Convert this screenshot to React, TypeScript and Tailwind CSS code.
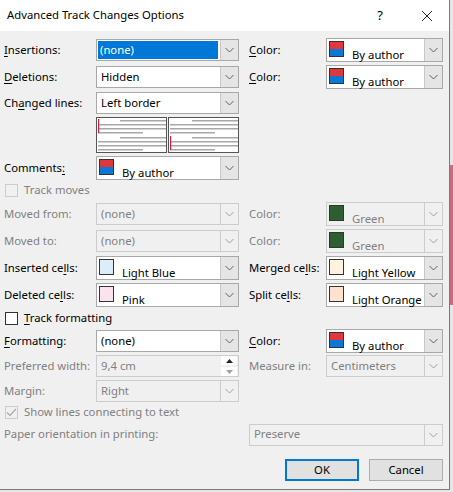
import React from "react";

const FONT = { fontFamily: '"Noto Sans", "Segoe UI", sans-serif' };

function Chevron({ disabled }: { disabled?: boolean }) {
  return (
    <svg width="9" height="6" viewBox="0 0 9 6">
      <path d="M0.5 1 L4.5 5 L8.5 1" fill="none" stroke={disabled ? "#a0a0a0" : "#606060"} strokeWidth="1" />
    </svg>
  );
}

function Swatch({ kind, color }: { kind: "author" | "solid"; color?: string }) {
  if (kind === "author") {
    return (
      <div className="w-[15px] h-[16px] border border-[#333] flex flex-col shrink-0">
        <div className="flex-1 bg-[#e0363d]" />
        <div className="flex-1 bg-[#0a78d4]" />
      </div>
    );
  }
  return <div className="w-[15px] h-[16px] border border-[#333] shrink-0" style={{ background: color }} />;
}

function Dropdown({
  w,
  h = 22,
  text,
  disabled,
  selected,
  swatch,
}: {
  w: number;
  h?: number;
  text: string;
  disabled?: boolean;
  selected?: boolean;
  swatch?: React.ReactNode;
}) {
  return (
    <div
      className={`flex border ${disabled ? "border-[#cccccc] bg-[#f0f0f0]" : "border-[#a8a8a8] bg-white"}`}
      style={{ width: w, height: h }}
    >
      <div className="flex-1 flex items-center min-w-0 px-[1px]">
        {swatch ? (
          <div className="flex items-start h-full pt-[2px] pl-[1px] gap-[8px]">
            {swatch}
            <span className={`text-[11.3px] leading-none whitespace-nowrap mt-[8px] ${disabled ? "text-[#808080]" : "text-black"}`}>{text}</span>
          </div>
        ) : selected ? (
          <div className="h-[18px] flex-1 bg-[#0078d7] text-white text-[11.3px] flex items-center pl-[2px] mr-[1px]">{text}</div>
        ) : (
          <span className={`text-[11.3px] whitespace-nowrap pl-[3px] ${disabled ? "text-[#808080]" : "text-black"}`}>{text}</span>
        )}
      </div>
      <div
        className={`w-[18px] flex items-center justify-center border-l ${
          disabled ? "border-[#cccccc] bg-[#f0f0f0]" : "border-[#c8c8c8] bg-[#e5e5e5]"
        }`}
      >
        <Chevron disabled={disabled} />
      </div>
    </div>
  );
}

function Label({ children, w, disabled }: { children: React.ReactNode; w: number; disabled?: boolean }) {
  return (
    <div className={`text-[11.3px] whitespace-nowrap shrink-0 ${disabled ? "text-[#808080]" : "text-black"}`} style={{ width: w }}>
      {children}
    </div>
  );
}

const U = ({ children }: { children: React.ReactNode }) => <span className="underline underline-offset-2">{children}</span>;

function Preview({ bar }: { bar: "top" | "bottom" }) {
  const lines = [
    [22, 68, 2],
    [0, 68, 6],
    [0, 68, 10],
    [0, 45, 14],
    [22, 68, 19],
    [0, 68, 23],
    [0, 68, 27],
    [0, 45, 31],
  ];
  return (
    <div className="w-[71px] h-[36px] border border-[#555] bg-white">
      <svg width="69" height="34" viewBox="0 0 69 34">
        {lines.map(([x1, x2, y], i) => (
          <rect key={i} x={x1 + 1} y={y} width={x2 - x1} height={1.5} fill="#a8a8a8" />
        ))}
        {bar === "top" ? (
          <rect x="1" y="1" width="1.2" height="14" fill="#c8203c" />
        ) : (
          <rect x="1" y="18" width="1.2" height="14" fill="#c8203c" />
        )}
      </svg>
    </div>
  );
}

function Checkbox({ checked, disabled }: { checked?: boolean; disabled?: boolean }) {
  return (
    <div
      className={`w-[13px] h-[13px] border flex items-center justify-center ${
        disabled ? "border-[#cccccc] bg-[#f0f0f0]" : "border-[#333] bg-white"
      }`}
    >
      {checked && (
        <svg width="11" height="9" viewBox="0 0 11 9">
          <path d="M1 4.5 L4 7.5 L10 1" fill="none" stroke="#a8a8a8" strokeWidth="1.2" />
        </svg>
      )}
    </div>
  );
}

function Row({ mt, h = 24, children }: { mt: number; h?: number; children: React.ReactNode }) {
  return (
    <div className="flex items-center" style={{ marginTop: mt, height: h }}>
      {children}
    </div>
  );
}

export default function App() {
  const LW = 92;
  const RW = 77;
  const DW = 143;
  const CW = 117;
  return (
    <div className="w-[453px] h-[492px] bg-[#e6e6e6] relative overflow-hidden" style={FONT}>
      <div className="absolute right-0 top-[165px] w-[3px] h-[140px] bg-[#c86b82]" />
      <div className="w-[450px] h-[490px] bg-[#f0f0f0] border-r border-b border-[#7a7a7a] flex flex-col">
        <div className="h-[31px] bg-white flex items-center shrink-0">
          <div className="pl-[7px] text-[11.3px] text-black flex-1">Advanced Track Changes Options</div>
          <div className="w-[20px] text-[13px] text-black text-center mr-[27px]">?</div>
          <div className="w-[20px] mr-[12px] flex items-center justify-center">
            <svg width="12" height="12" viewBox="0 0 12 12">
              <path d="M1 1 L11 11 M11 1 L1 11" stroke="#222" strokeWidth="1" />
            </svg>
          </div>
        </div>
        <div className="pl-[4px] flex flex-col">
          <Row mt={7}>
            <Label w={LW}>
              <U>I</U>nsertions:
            </Label>
            <Dropdown w={DW} text="(none)" selected />
            <div className="w-[10px]" />
            <Label w={RW}>
              <U>C</U>olor:
            </Label>
            <Dropdown w={CW} h={24} text="By author" swatch={<Swatch kind="author" />} />
          </Row>
          <Row mt={3}>
            <Label w={LW}>
              <U>D</U>eletions:
            </Label>
            <Dropdown w={DW} text="Hidden" />
            <div className="w-[10px]" />
            <Label w={RW}>
              <U>C</U>olor:
            </Label>
            <Dropdown w={CW} h={24} text="By author" swatch={<Swatch kind="author" />} />
          </Row>
          <Row mt={2}>
            <Label w={LW}>
              Ch<U>a</U>nged lines:
            </Label>
            <Dropdown w={DW} text="Left border" />
          </Row>
          <div className="flex mt-[2px]" style={{ marginLeft: LW }}>
            <Preview bar="top" />
            <div className="w-[1px]" />
            <Preview bar="bottom" />
          </div>
          <Row mt={3}>
            <Label w={LW}>
              Comments<U>:</U>
            </Label>
            <Dropdown w={DW} h={24} text="By author" swatch={<Swatch kind="author" />} />
          </Row>
          <Row mt={2} h={16}>
            <div className="ml-[1px] mr-[6px]">
              <Checkbox disabled />
            </div>
            <span className="text-[11.3px] text-[#808080]">Track moves</span>
          </Row>
          <Row mt={4}>
            <Label w={LW} disabled>
              Moved from:
            </Label>
            <Dropdown w={DW} text="(none)" disabled />
            <div className="w-[10px]" />
            <Label w={RW} disabled>
              Color:
            </Label>
            <Dropdown w={CW} h={24} text="Green" disabled swatch={<Swatch kind="solid" color="#2c5e31" />} />
          </Row>
          <Row mt={3}>
            <Label w={LW} disabled>
              Moved to:
            </Label>
            <Dropdown w={DW} text="(none)" disabled />
            <div className="w-[10px]" />
            <Label w={RW} disabled>
              Color:
            </Label>
            <Dropdown w={CW} h={24} text="Green" disabled swatch={<Swatch kind="solid" color="#2c5e31" />} />
          </Row>
          <Row mt={3}>
            <Label w={LW}>
              Inserted ce<U>l</U>ls:
            </Label>
            <Dropdown w={DW} h={24} text="Light Blue" swatch={<Swatch kind="solid" color="#ddedf8" />} />
            <div className="w-[10px]" />
            <Label w={RW}>
              Merged ce<U>l</U>ls:
            </Label>
            <Dropdown w={CW} h={24} text="Light Yellow" swatch={<Swatch kind="solid" color="#fff3e0" />} />
          </Row>
          <Row mt={3}>
            <Label w={LW}>
              Deleted ce<U>l</U>ls:
            </Label>
            <Dropdown w={DW} h={24} text="Pink" swatch={<Swatch kind="solid" color="#fbe3ee" />} />
            <div className="w-[10px]" />
            <Label w={RW}>
              Split ce<U>l</U>ls:
            </Label>
            <Dropdown w={CW} h={24} text="Light Orange" swatch={<Swatch kind="solid" color="#fde3cd" />} />
          </Row>
          <Row mt={3} h={16}>
            <div className="ml-[1px] mr-[6px]">
              <Checkbox />
            </div>
            <span className="text-[11.3px] text-black">
              <U>T</U>rack formatting
            </span>
          </Row>
          <Row mt={3}>
            <Label w={LW}>
              <U>F</U>ormatting:
            </Label>
            <Dropdown w={DW} text="(none)" />
            <div className="w-[10px]" />
            <Label w={RW}>
              <U>C</U>olor:
            </Label>
            <Dropdown w={CW} h={24} text="By author" swatch={<Swatch kind="author" />} />
          </Row>
          <Row mt={1}>
            <Label w={LW} disabled>
              Preferred width:
            </Label>
            <div className="flex border border-[#cccccc] bg-[#f0f0f0] h-[22px]" style={{ width: DW }}>
              <div className="flex-1 flex items-center pl-[4px] text-[11.3px] text-[#808080]">9,4 cm</div>
              <div className="w-[18px] flex flex-col items-center justify-center gap-[2px]">
                <div className="w-[16px] h-[9px] bg-white flex items-center justify-center">
                  <svg width="7" height="4" viewBox="0 0 7 4">
                    <path d="M0 4 L3.5 0 L7 4 Z" fill="#222" />
                  </svg>
                </div>
                <div className="w-[16px] h-[9px] bg-white flex items-center justify-center">
                  <svg width="7" height="4" viewBox="0 0 7 4">
                    <path d="M0 0 L3.5 4 L7 0 Z" fill="#a0a0a0" />
                  </svg>
                </div>
              </div>
            </div>
            <div className="w-[10px]" />
            <Label w={RW} disabled>
              Measure in:
            </Label>
            <Dropdown w={CW} text="Centimeters" disabled />
          </Row>
          <Row mt={1}>
            <Label w={LW} disabled>
              Margin:
            </Label>
            <Dropdown w={DW} text="Right" disabled />
          </Row>
          <Row mt={1} h={16}>
            <div className="ml-[1px] mr-[6px]">
              <Checkbox disabled checked />
            </div>
            <span className="text-[11.3px] text-[#808080]">Show lines connecting to text</span>
          </Row>
          <Row mt={3} h={23}>
            <div className="text-[11.3px] text-[#808080] w-[245px]">Paper orientation in printing:</div>
            <Dropdown w={194} text="Preserve" disabled />
          </Row>
          <div className="flex mt-[13px]">
            <div className="ml-[281px] w-[74px] h-[22px] border-2 border-[#0078d7] bg-[#e1e1e1] flex items-center justify-center text-[11.3px] text-black">
              OK
            </div>
            <div className="ml-[10px] w-[74px] h-[22px] border border-[#adadad] bg-[#e1e1e1] flex items-center justify-center text-[11.3px] text-black">
              Cancel
            </div>
          </div>
        </div>
      </div>
    </div>
  );
}
